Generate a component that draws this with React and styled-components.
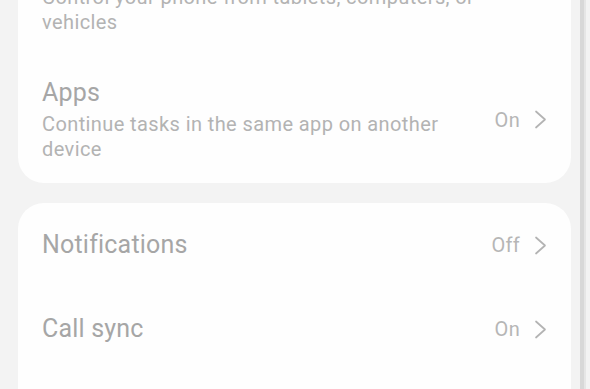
import React from "react";
import styled, { createGlobalStyle } from "styled-components";

const Global = createGlobalStyle`
  html, body { margin: 0; padding: 0; background: #f3f3f3; overflow: hidden; }
  body { font-family: Roboto, "Noto Sans", "Liberation Sans", sans-serif; }
  * { box-sizing: border-box; }
`;

const Screen = styled.div`
  position: relative;
  width: 590px;
  height: 389px;
  overflow: hidden;
  background: #f3f3f3;
`;

const Scroller = styled.div`
  display: flex;
  flex-direction: column;
  gap: 20px;
  margin-top: -71px;
  padding: 0 19px 0 18px;
`;

const Card = styled.section`
  background: #fefefe;
  border-radius: 26px;
  padding: 0 24px;
  display: flex;
  flex-direction: column;
`;

const Row = styled.div`
  display: flex;
  align-items: center;
  gap: 40px;
  min-height: 84px;
  padding: 22px 0;
`;

const Texts = styled.div`
  flex: 1;
  display: flex;
  flex-direction: column;
  gap: 4px;
  min-width: 0;
`;

const Title = styled.div`
  font-size: 25px;
  line-height: 30px;
  color: #a6a6a6;
  letter-spacing: 0.2px;
`;

const Sub = styled.div`
  font-size: 20px;
  line-height: 24.5px;
  color: #b3b3b3;
  letter-spacing: 0.4px;
`;

const Value = styled.div`
  display: flex;
  align-items: center;
  gap: 14px;
  font-size: 20px;
  letter-spacing: 0.3px;
  color: #b6b6b6;
`;

const ScrollTrack = styled.div`
  position: absolute;
  top: 0;
  right: 4px;
  width: 6px;
  height: 100%;
  display: flex;
`;

const ScrollThumb = styled.div`
  width: 4px;
  background: #d8d8d8;
`;

const ScrollEdge = styled.div`
  width: 2px;
  background: #e6e6e6;
`;

const Chevron = () => (
  <svg width="13" height="19" viewBox="0 0 13 19" fill="none">
    <path d="M2 1.5 L11 9.5 L2 17.5" stroke="#b3b3b3" strokeWidth="1.7" strokeLinecap="round" strokeLinejoin="round" />
  </svg>
);

const Item = ({ title, sub, value }) => (
  <Row>
    <Texts>
      <Title>{title}</Title>
      {sub && <Sub>{sub}</Sub>}
    </Texts>
    {value && (
      <Value>
        {value}
        <Chevron />
      </Value>
    )}
  </Row>
);

export default function App() {
  return (
    <Screen>
      <Global />
      <Scroller>
        <Card>
          <Item title="Phone control" sub="Control your phone from tablets, computers, or vehicles" />
          <Item title="Apps" sub="Continue tasks in the same app on another device" value="On" />
        </Card>
        <Card>
          <Item title="Notifications" value="Off" />
          <Item title="Call sync" value="On" />
          <Item title="Messages sync" value="On" />
        </Card>
      </Scroller>
      <ScrollTrack>
        <ScrollThumb />
        <ScrollEdge />
      </ScrollTrack>
    </Screen>
  );
}
